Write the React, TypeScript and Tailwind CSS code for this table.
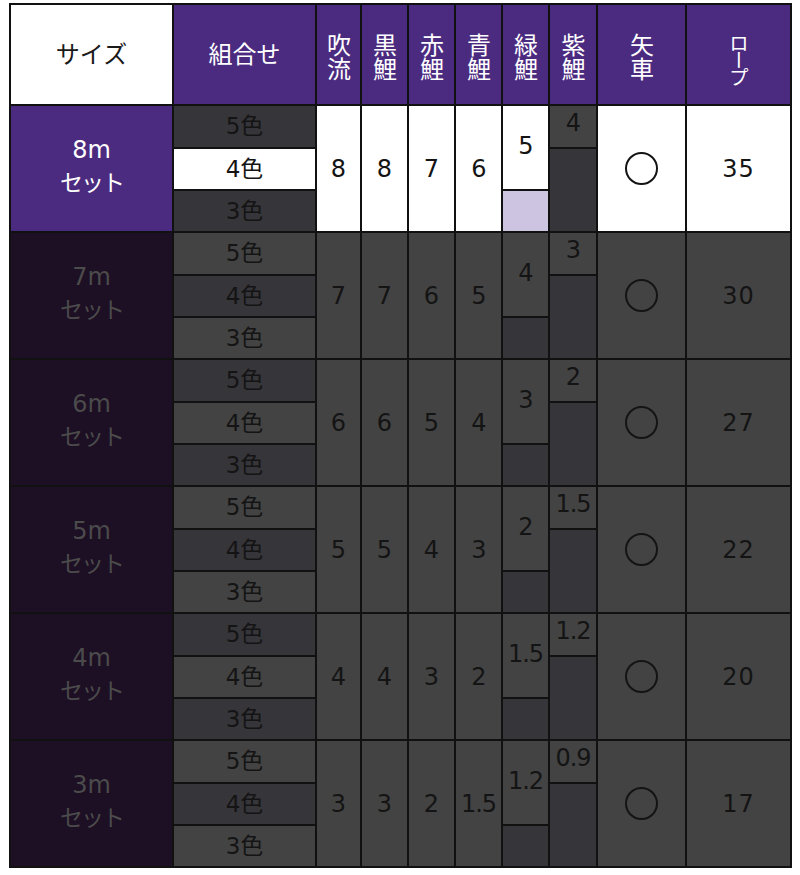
import React from 'react';

type Group = {
  size: string;
  fuki: string;
  kuro: string;
  aka: string;
  ao: string;
  midori: string;
  murasaki: string;
  rope: string;
};

const groups: Group[] = [
  { size: '8m', fuki: '8', kuro: '8', aka: '7', ao: '6', midori: '5', murasaki: '4', rope: '35' },
  { size: '7m', fuki: '7', kuro: '7', aka: '6', ao: '5', midori: '4', murasaki: '3', rope: '30' },
  { size: '6m', fuki: '6', kuro: '6', aka: '5', ao: '4', midori: '3', murasaki: '2', rope: '27' },
  { size: '5m', fuki: '5', kuro: '5', aka: '4', ao: '3', midori: '2', murasaki: '1.5', rope: '22' },
  { size: '4m', fuki: '4', kuro: '4', aka: '3', ao: '2', midori: '1.5', murasaki: '1.2', rope: '20' },
  { size: '3m', fuki: '3', kuro: '3', aka: '2', ao: '1.5', midori: '1.2', murasaki: '0.9', rope: '17' },
];

const heads = ['吹流', '黒鯉', '赤鯉', '青鯉', '緑鯉', '紫鯉', '矢車'];

const font = { fontFamily: '"DejaVu Sans", "Noto Sans CJK JP", sans-serif' };
const jp = { fontFamily: '"Noto Sans CJK JP", sans-serif' };

function Cell({ className, children }: { className: string; children?: React.ReactNode }) {
  return <div className={`flex items-center justify-center ${className}`}>{children}</div>;
}

function GroupRows({ g, index }: { g: Group; index: number }) {
  const top = index === 0;
  const even = index % 2 === 0;
  const num = top ? 'bg-white text-[#141414]' : 'bg-[#434343] text-[#141414]';
  const dark = 'bg-[#36353a] text-[#141414]';
  const light = 'bg-[#434343] text-[#141414]';
  const combo = (n: number) => {
    if (top) return n === 1 ? 'bg-white text-[#141414]' : dark;
    if (even) return n === 1 ? light : dark;
    return n === 1 ? dark : light;
  };

  return (
    <>
      <Cell className={`row-span-3 flex-col pb-1 ${top ? 'bg-[#4b2b7f] text-white' : 'bg-[#1d0f24] text-[#4b4b4b]'}`}>
        <span className="block h-[28px] text-[24px] leading-[28px]">{g.size}</span>
        <span className="block h-[34px] text-[23px] leading-[34px] tracking-[-2px]" style={jp}>セット</span>
      </Cell>
      <Cell className={`text-[23px] ${combo(0)}`}>5色</Cell>
      <Cell className={`row-span-3 text-[24px] ${num}`}>{g.fuki}</Cell>
      <Cell className={`row-span-3 text-[24px] ${num}`}>{g.kuro}</Cell>
      <Cell className={`row-span-3 text-[24px] ${num}`}>{g.aka}</Cell>
      <Cell className={`row-span-3 text-[24px] tracking-[-1px] ${num}`}>{g.ao}</Cell>
      <Cell className={`row-span-2 text-[24px] tracking-[-1px] pb-1 ${num}`}>{g.midori}</Cell>
      <Cell className="text-[24px] tracking-[-1px] bg-[#434343] text-[#141414] pb-2">{g.murasaki}</Cell>
      <Cell className={`row-span-3 ${num}`}>
        <span className="block w-[33px] h-[33px] rounded-full border-2 border-[#141414]" aria-label="〇" />
      </Cell>
      <Cell className={`row-span-3 text-[24px] tracking-[1px] ${num}`}>{g.rope}</Cell>

      <Cell className={`text-[23px] ${combo(1)}`}>4色</Cell>
      <Cell className="row-span-2 bg-[#36353a]" />

      <Cell className={`text-[23px] ${combo(2)}`}>3色</Cell>
      <Cell className={top ? 'bg-[#cdc4e2]' : 'bg-[#36353a]'} />
    </>
  );
}

export default function App() {
  return (
    <div className="w-[800px] h-[875px] bg-white pt-[3px] pl-[9px]" style={font}>
      <div className="grid w-max gap-[2px] border-2 border-[#111] bg-[#111] grid-cols-[161px_141px_43px_45px_45px_45px_45px_46px_87px_103px] grid-rows-[99px_repeat(6,41px_40px_40px)]">
        <Cell className="bg-white text-[#1a1a1a] text-[24px] pb-1">
          <span style={jp}>サイズ</span>
        </Cell>
        <Cell className="bg-[#4b2b7f] text-white text-[24px] pb-1">
          <span style={jp}>組合せ</span>
        </Cell>
        {heads.map((h) => (
          <Cell key={h} className="bg-[#4b2b7f] text-white">
            <span className="[writing-mode:vertical-rl] text-[24px] leading-none pt-1" style={jp}>{h}</span>
          </Cell>
        ))}
        <Cell className="bg-[#4b2b7f] text-white">
          <span className="[writing-mode:vertical-rl] text-[20px] leading-none tracking-[-3px] pt-2" style={jp}>ロープ</span>
        </Cell>
        {groups.map((g, i) => (
          <GroupRows key={g.size} g={g} index={i} />
        ))}
      </div>
    </div>
  );
}
